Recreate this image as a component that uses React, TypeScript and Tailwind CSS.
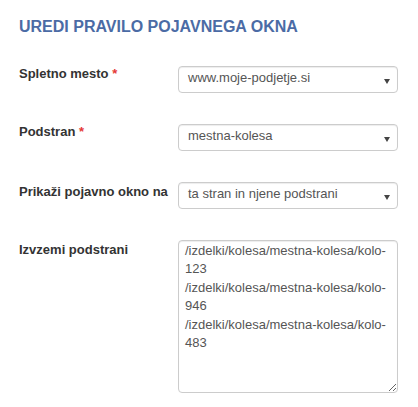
import React from "react";

function Caret() {
  return (
    <svg width="6" height="5" viewBox="0 0 6 5" className="mt-[12px] mr-[7px] shrink-0">
      <path d="M0 0 H6 L3 5 Z" fill="#444" />
    </svg>
  );
}

function FakeSelect({ value }: { value: string }) {
  return (
    <div className="flex h-[27px] w-[220px] items-start justify-between rounded-[4px] border border-[#cccccc] bg-white pl-[9px] shadow-[inset_0_1px_1px_rgba(0,0,0,0.075)]">
      <span className="text-[13px] leading-[22px] text-[#555555]">{value}</span>
      <Caret />
    </div>
  );
}

function Label({ text, required, className }: { text: string; required?: boolean; className: string }) {
  return (
    <div className={"w-[159px] shrink-0 text-[13px] font-bold leading-[18px] text-[#333333] " + className}>
      {text}
      {required && <span className="text-[#e53935]"> *</span>}
    </div>
  );
}

export default function App() {
  const paths =
    "/izdelki/kolesa/mestna-kolesa/kolo-123\n/izdelki/kolesa/mestna-kolesa/kolo-946\n/izdelki/kolesa/mestna-kolesa/kolo-483";
  return (
    <div className="min-h-[407px] w-[418px] bg-white pl-[19px] pr-[20px] pt-[19px] font-['Liberation_Sans',Arial,sans-serif]">
      <h1 className="h-[16px] text-[16px] font-bold leading-[16px] text-[#4b6ba5]">
        UREDI PRAVILO POJAVNEGA OKNA
      </h1>
      <div className="mt-[31px] flex flex-col gap-[31px]">
        <div className="flex items-start">
          <Label text="Spletno mesto" required className="-mt-[1px]" />
          <FakeSelect value="www.moje-podjetje.si" />
        </div>
        <div className="flex items-start">
          <Label text="Podstran" required className="-mt-[1.5px]" />
          <FakeSelect value="mestna-kolesa" />
        </div>
        <div className="flex items-start">
          <Label text="Prikaži pojavno okno na" className="mt-[0.5px] whitespace-nowrap" />
          <FakeSelect value="ta stran in njene podstrani" />
        </div>
        <div className="flex items-start">
          <Label text="Izvzemi podstrani" className="mt-[1px]" />
          <textarea
            readOnly
            defaultValue={paths}
            className="h-[153px] w-[220px] rounded-[4px] border border-[#cccccc] bg-white px-[6px] pt-[1px] text-[13px] leading-[18.4px] text-[#555555] shadow-[inset_0_1px_1px_rgba(0,0,0,0.075)] outline-none font-['Liberation_Sans',Arial,sans-serif]"
          />
        </div>
      </div>
    </div>
  );
}
